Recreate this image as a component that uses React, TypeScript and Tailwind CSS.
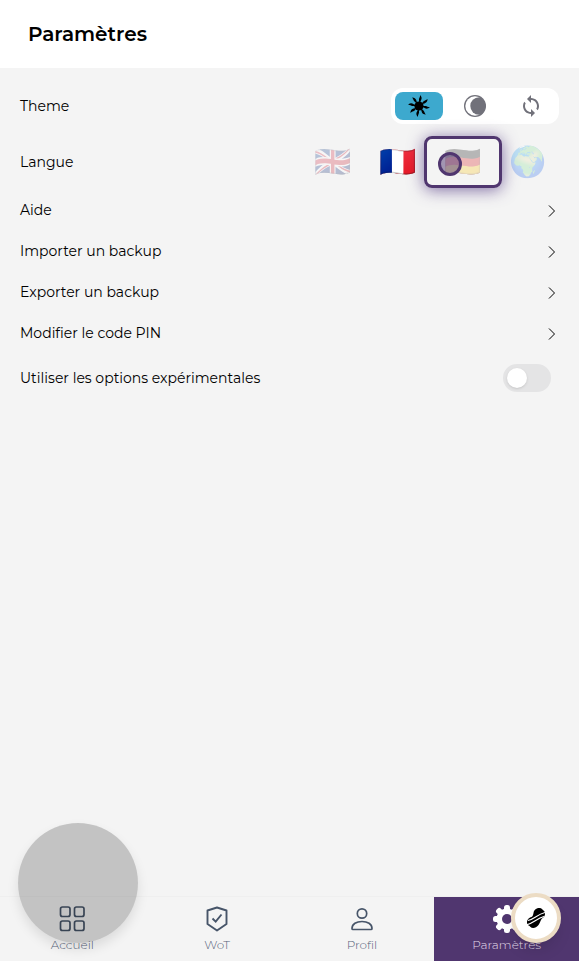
import { useState } from "react";

const SunIcon = () => (
  <svg viewBox="0 0 24 24" className="size-6" aria-hidden="true">
    <circle cx="12" cy="12" r="4.600" />
    <g fill="currentColor">
      {[10, 55, 100, 145, 190, 235, 280, 325].map((angle) => (
        <path key={angle} d="M11.400 8 L10.800 5.500 C10.800 3.800 11.500 3.400 11.300 1 C13.200 2.500 13.800 4.500 13 6 L12.400 8 Z" transform={`rotate(${angle} 12 12)`} />
      ))}
    </g>
  </svg>
);

const MoonIcon = () => (
  <svg viewBox="0 0 24 24" className="size-6" fill="currentColor" aria-hidden="true">
    <circle cx="12" cy="12" r="11" />
    <circle cx="12" cy="12" r="9.700" fill="#fff" />
    <path d="M16 3.300 A8.700 8.700 0 0 0 16 20.700 L18 20.500 A10.400 10.400 0 0 0 18 3.500 Z" />
  </svg>
);

const SyncIcon = () => (
  <svg viewBox="0 0 24 24" className="size-6" fill="currentColor" aria-hidden="true">
    <path d="M12 4V1L8 5l4 4V6c3.310 0 6 2.690 6 6 0 1.010-.25 1.970-.7 2.800l1.460 1.460C19.540 15.030 20 13.570 20 12c0-4.420-3.580-8-8-8zm0 14c-3.310 0-6-2.690-6-6 0-1.010.25-1.970.7-2.800L5.240 7.740C4.460 8.970 4 10.430 4 12c0 4.420 3.580 8 8 8v3l4-4-4-4v3z" />
  </svg>
);

const HomeIcon = () => (
  <svg viewBox="0 0 28 28" className="size-7" fill="none" stroke="currentColor" strokeWidth="1.700" aria-hidden="true">
    <rect x="2.500" y="2" width="9.500" height="9.500" rx="2" />
    <rect x="16.500" y="2" width="9.500" height="9.500" rx="2" />
    <rect x="2.500" y="16" width="9.500" height="9.500" rx="2" />
    <rect x="16.500" y="16" width="9.500" height="9.500" rx="2" />
  </svg>
);

const ShieldIcon = () => (
  <svg viewBox="0 0 28 28" className="size-7" fill="none" stroke="currentColor" strokeWidth="1.900" aria-hidden="true">
    <path d="M14 2.500 L23.500 5.500 V19 L14 25.500 L4.500 19 V5.500 Z" strokeLinejoin="round" />
    <path d="M9.500 13.500 L12.700 16.700 L18.500 9.500" />
  </svg>
);

const ProfileIcon = () => (
  <svg viewBox="0 0 28 28" className="size-7" fill="none" stroke="currentColor" strokeWidth="1.700" aria-hidden="true">
    <circle cx="14" cy="8.500" r="4.700" />
    <path d="M4 23.500 C4 19 8.500 16.500 14 16.500 C19.500 16.500 24 19 24 23.500 Q24 24.500 23 24.500 H5 Q4 24.500 4 23.500 Z" />
  </svg>
);

const GearIcon = () => (
  <svg viewBox="0 0 28 28" className="size-7" aria-hidden="true">
    <g fill="currentColor">
      <rect x="11" y="0" width="6" height="28" rx="2.500" />
      <rect x="11" y="0" width="6" height="28" rx="2.500" transform="rotate(45 14 14)" />
      <rect x="11" y="0" width="6" height="28" rx="2.500" transform="rotate(90 14 14)" />
      <rect x="11" y="0" width="6" height="28" rx="2.500" transform="rotate(135 14 14)" />
      <circle cx="14" cy="14" r="10.500" />
    </g>
    <circle cx="14" cy="14" r="5" className="fill-[#50366f]" />
  </svg>
);

const themes = [
  { id: "light", label: "Clair", icon: <SunIcon /> },
  { id: "dark", label: "Sombre", icon: <MoonIcon /> },
  { id: "auto", label: "Automatique", icon: <SyncIcon /> },
];

const languages = [
  { id: "en", label: "English", flag: "🇬🇧" },
  { id: "fr", label: "Français", flag: "🇫🇷" },
  { id: "de", label: "Deutsch", flag: "🇩🇪" },
  { id: "eo", label: "Esperanto", flag: "🌍" },
];

const links = ["Aide", "Importer un backup", "Exporter un backup", "Modifier le code PIN"];

const tabs = [
  { label: "Accueil", icon: <HomeIcon /> },
  { label: "WoT", icon: <ShieldIcon /> },
  { label: "Profil", icon: <ProfileIcon /> },
  { label: "Paramètres", icon: <GearIcon />, active: true },
];

const App = () => {
  const [theme, setTheme] = useState("light");
  const [language, setLanguage] = useState("fr");
  const [experimental, setExperimental] = useState(false);

  return (
    <div className="min-h-screen flex flex-col bg-[#f4f4f4] text-sm text-black font-[Montserrat,Inter,sans-serif]">
      <header className="h-17 px-7 flex items-center bg-white">
        <h1 className="text-xl font-semibold">Paramètres</h1>
      </header>

      <main className="flex-1 px-5 pt-2">
        <div className="h-15 flex items-center justify-between">
          <span>Theme</span>
          <div className="flex gap-2 p-1 rounded-xl bg-white">
            {themes.map((item) => (
              <button
                key={item.id}
                aria-label={item.label}
                onClick={() => setTheme(item.id)}
                className={`w-12 h-7 rounded-lg flex items-center justify-center cursor-pointer ${
                  theme === item.id ? "bg-[#3da9ce] text-black" : "text-[#71717a]"
                }`}
              >
                {item.icon}
              </button>
            ))}
          </div>
        </div>

        <div className="h-13 flex items-center justify-between">
          <span>Langue</span>
          <div className="flex items-center gap-7 pr-[13px]">
            {languages.map((item) => (
              <div key={item.id} className="relative">
                <button
                  aria-label={item.label}
                  onClick={() => setLanguage(item.id)}
                  className={`block text-3xl leading-7 cursor-pointer ${language === item.id ? "" : "opacity-25"}`}
                >
                  {item.flag}
                </button>
                {/* Guided tour: target frame and tap marker */}
                {item.id === "de" && (
                  <>
                    <div className="absolute -left-5 -right-[21px] -inset-y-3 rounded-lg border-3 border-[#50366f] shadow-[0_2px_16px_rgba(80,54,130,0.7)] pointer-events-none" />
                    <div className="absolute -left-1.5 top-1 size-6 rounded-full border-3 border-[#50366f] bg-[#50366f]/50 pointer-events-none" />
                  </>
                )}
              </div>
            ))}
          </div>
        </div>

        <nav className="py-px">
          {links.map((label) => (
            <a key={label} href="#" className="h-[41px] flex items-center justify-between">
              {label}
              <svg viewBox="0 0 16 16" className="size-4" fill="none" stroke="currentColor" aria-hidden="true">
                <path d="M6 3.500 L11.500 9 L6 14.500" />
              </svg>
            </a>
          ))}
        </nav>

        <label className="h-12 pr-2 flex items-center justify-between cursor-pointer">
          Utiliser les options expérimentales
          <span className="relative w-12 h-7">
            <input
              type="checkbox"
              role="switch"
              checked={experimental}
              onChange={(e) => setExperimental(e.target.checked)}
              className="peer appearance-none block w-12 h-7 rounded-full bg-[#e4e4e5] checked:bg-[#50366f] cursor-pointer"
            />
            <span className="absolute left-1 top-1 size-5 rounded-full bg-white shadow-sm transition-all peer-checked:left-6 pointer-events-none" />
          </span>
        </label>
      </main>

      <nav className="h-[65px] grid grid-cols-4 border-t border-[#efefef] text-xs font-light">
        {tabs.map((tab) => (
          <a
            key={tab.label}
            href="#"
            className={`flex flex-col items-center pt-2 gap-1 ${tab.active ? "bg-[#50366f] text-white" : "text-[#475569]"}`}
          >
            {tab.icon}
            <span className={tab.active ? "text-[#e0d9e8]" : "text-[#56637a]"}>{tab.label}</span>
          </a>
        ))}
      </nav>

      {/* Floating overlays */}
      <div className="fixed left-[18px] bottom-[18px] size-30 rounded-full bg-black/20 shadow-[0_6px_12px_rgba(0,0,0,0.1)] pointer-events-none" />
      <button
        aria-label="Outils"
        className="fixed right-[18px] bottom-[18px] size-[50px] rounded-full bg-white border-4 border-[#ecdcc4] shadow-lg flex items-center justify-center cursor-pointer"
      >
        <svg viewBox="0 0 24 24" className="size-6" aria-hidden="true">
          <path d="M9.500 7 C10 3.500 12.500 2 15.500 2 C18 2 18.500 4 20 5 C22 7 21 11 18 12.500 C16.500 14 16.500 16 14.500 19 C12 22.500 8 22.500 6.500 21 C5.500 19.500 3.500 19.500 3 17 C2.800 13.500 5 11.500 7.500 11 C9 10 9.200 8.500 9.500 7 Z" />
          <path d="M4 14.500 C10 13.500 13 8.500 21 6.500 M3 18.800 C10 16.500 13 12.500 20 10.500" stroke="#fff" strokeWidth="1.200" fill="none" />
        </svg>
      </button>
    </div>
  );
};

export default App;
